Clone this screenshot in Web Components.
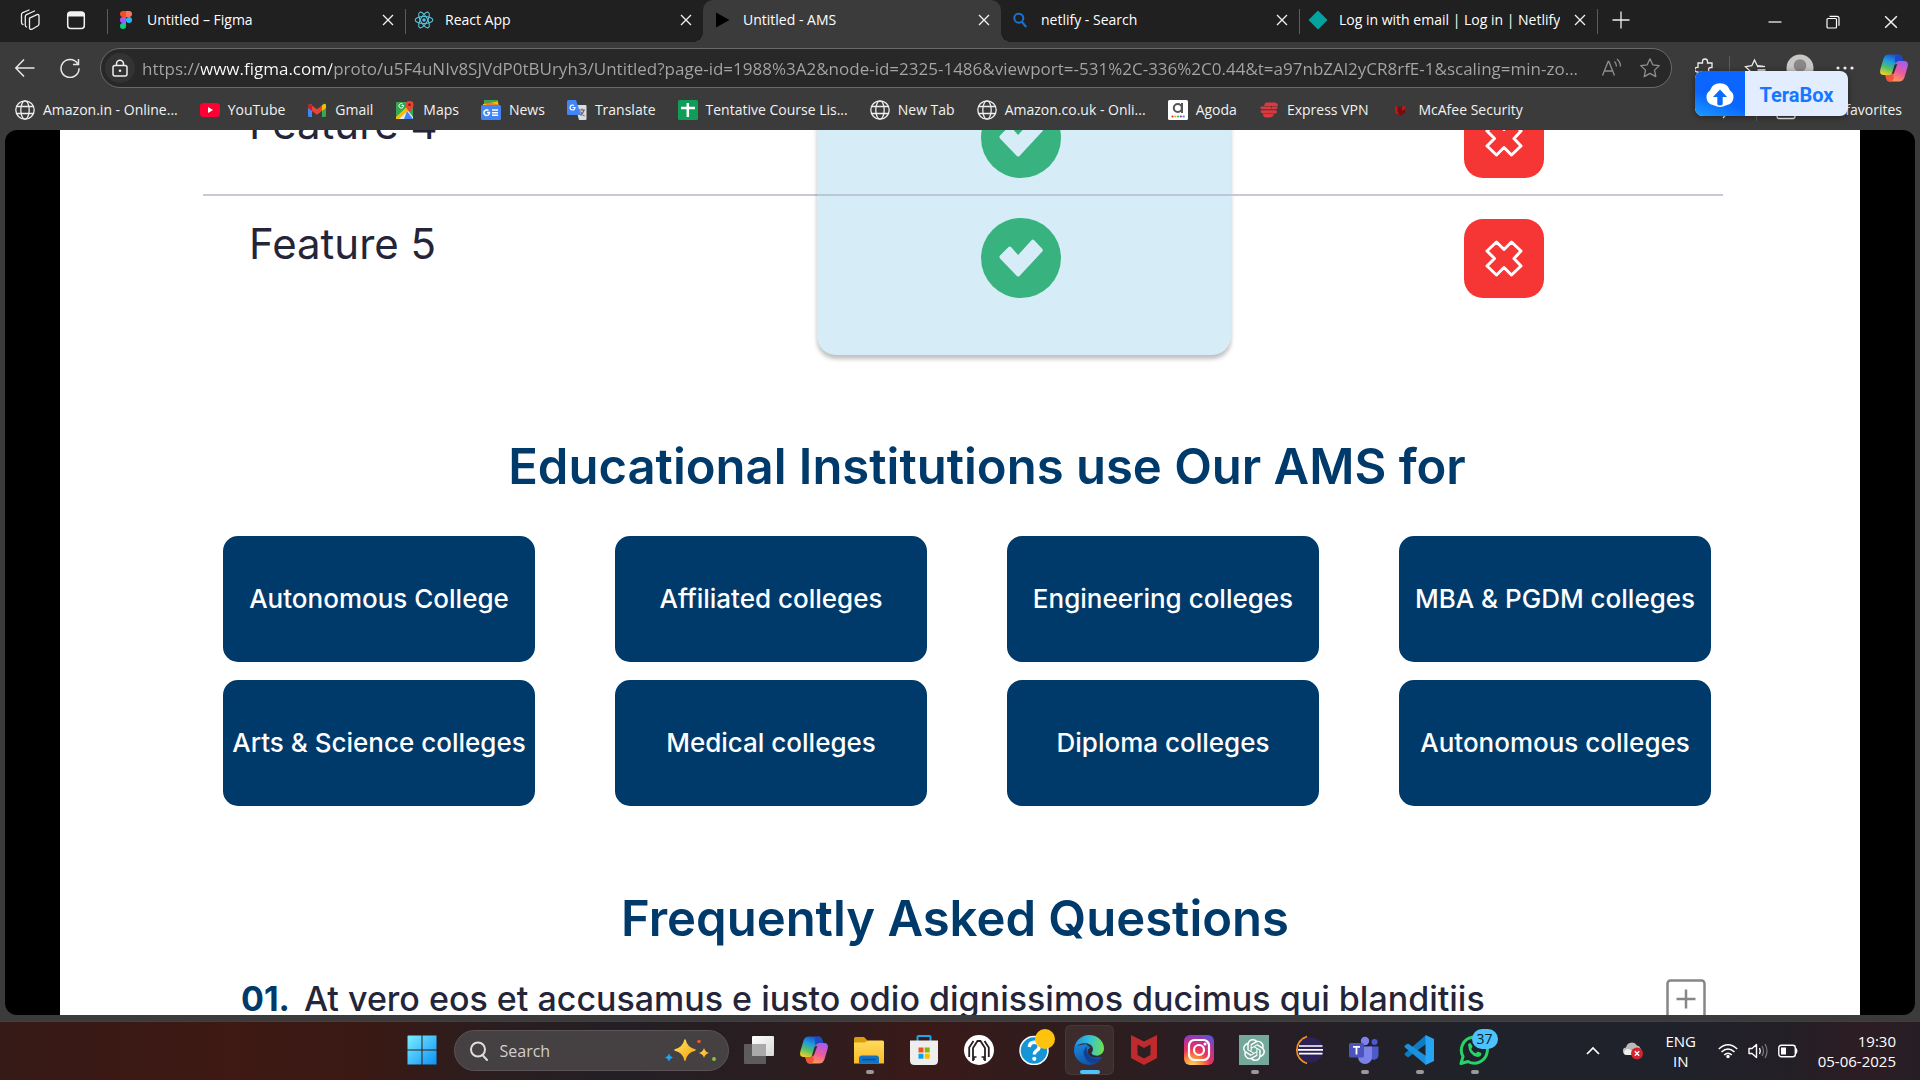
<!DOCTYPE html>
<html lang="en">
<head>
<meta charset="utf-8">
<title>Untitled - AMS</title>
<style>
  html, body { margin: 0; height: 100%; }
  body { font-family: "Open Sans", "Noto Sans", sans-serif; font-size: 14px; color: #fff; background: #3b3b3b; overflow: hidden; }
</style>
</head>
<body>
<desktop-screen></desktop-screen>

<script>
const ICONS = {
  workspaces: ['0 0 22 22', '<g fill="none" stroke="#eee" stroke-width="1.3" stroke-linejoin="round" stroke-linecap="round"><path d="M9.5 9.2 17 5.6q1.6-.6 2 1v8.2q0 1.3-1 2L12 20.200q-2 .8-2.500-1z"/><path d="M6.500 18q-1.200-.4-1.200-2V7.600q0-1.400 1.200-2l8-3.600"/><path d="M3 15.500q-1.500-.4-1.500-2V5.600q0-1.400 1.200-2L9 1"/></g>'],
  tabpane: ['0 0 20 20', '<rect x="1.700" y="2" width="16.600" height="16.500" rx="3" fill="none" stroke="#f2f2f2" stroke-width="1.500"/><path d="M1.700 6.500V5a3 3 0 0 1 3-3h10.600a3 3 0 0 1 3 3v1.500z" fill="#f2f2f2"/>'],
  figma: ['0 0 12 18', '<path d="M3 0h3v6H3a3 3 0 0 1 0-6z" fill="#f24e1e"/><path d="M6 0h3a3 3 0 0 1 0 6H6z" fill="#ff7262"/><path d="M3 6h3v6H3a3 3 0 0 1 0-6z" fill="#a259ff"/><circle cx="9" cy="9" r="3" fill="#1abcfe"/><path d="M3 12h3v3a3 3 0 1 1-3-3z" fill="#0acf83"/>'],
  react: ['0 0 20 20', '<g fill="none" stroke="#58c4dc" stroke-width="1.100"><ellipse cx="10" cy="10" rx="8.800" ry="3.500"/><ellipse cx="10" cy="10" rx="8.800" ry="3.500" transform="rotate(60 10 10)"/><ellipse cx="10" cy="10" rx="8.800" ry="3.500" transform="rotate(120 10 10)"/></g><circle cx="10" cy="10" r="1.700" fill="#58c4dc"/>'],
  play: ['0 0 20 20', '<path d="M4 2.500v15L17.500 10z" fill="#000"/>'],
  lens: ['0 0 20 20', '<g fill="none" stroke="#1a73d0" stroke-width="2" stroke-linecap="round"><circle cx="8.800" cy="8.200" r="4.500"/><path d="m12 12 3.800 4.500"/></g>'],
  diamond: ['0 0 20 20', '<path d="M10 .5 19.500 10 10 19.500.5 10z" fill="#05a3a0"/>'],
  close: ['0 0 12 12', '<path d="m1 1 10 10M11 1 1 11" stroke="#f2f2f2" stroke-width="1.300" fill="none"/>'],
  plus: ['0 0 18 18', '<path d="M9 .5v17M.5 9h17" stroke="#eee" stroke-width="1.300"/>'],
  minimize: ['0 0 14 14', '<path d="M.5 7h13" stroke="#fff" stroke-width="1.200"/>'],
  restore: ['0 0 14 14', '<g fill="none" stroke="#fff" stroke-width="1.200"><rect x="1" y="3.500" width="9.500" height="9.500" rx="1"/><path d="M3.500 1.300H11a2 2 0 0 1 2 2v7.500"/></g>'],
  back: ['0 0 20 20', '<path d="M19.500 10H1M9 1.500.8 10 9 18.500" fill="none" stroke="#e8e8e8" stroke-width="1.500"/>'],
  reload: ['0 0 20 20', '<path d="M17.500 5.500A9 9 0 1 0 19 10.200M18.500 1v5.500H13" fill="none" stroke="#e8e8e8" stroke-width="1.500"/>'],
  lock: ['0 0 18 18', '<g fill="none" stroke="#eee" stroke-width="1.500"><rect x="2" y="6.500" width="14" height="10.500" rx="2"/><path d="M5.500 6.500V4.800a3.500 3.500 0 0 1 7 0v1.700"/></g><circle cx="9" cy="11.700" r="1.300" fill="#eee"/>'],
  aloud: ['0 0 22 20', '<path d="M1.500 17.500 7.200 3.500h.6l5.700 14M3.500 13h8M13.500 3.500q2 2 2 5M16 1q3.500 3 3.500 7.500" fill="none" stroke="#8f8f8f" stroke-width="1.300"/>'],
  star: ['0 0 22 22', '<path d="m11 1.800 2.800 6 6.500.8-4.800 4.500 1.300 6.500L11 16.400l-5.800 3.200 1.300-6.500L1.700 8.600l6.500-.8z" fill="none" stroke="#8f8f8f" stroke-width="1.300" stroke-linejoin="round"/>'],
  puzzle: ['0 0 20 20', '<path d="M3 5h4.500V3.500a2.500 2.500 0 0 1 5 0V5H17v4.500h-1.200a2.300 2.300 0 0 0 0 4.600H17V19H3v-5H2a2.300 2.300 0 0 1 0-4.600h1z" fill="none" stroke="#eee" stroke-width="1.300"/>'],
  favs: ['0 0 22 22', '<path d="M10 19 5 21l1-7-4.500-4.300 6.300-1L10.500 3l2.800 5.700 5.700.8M13.500 13h8M14.500 17h7" fill="none" stroke="#eee" stroke-width="1.300"/><path d="M13 9.500h8" stroke="#eee" stroke-width="1.300"/>'],
  avatar: ['0 0 28 28', '<circle cx="14" cy="14" r="13.500" fill="#c9c7c5"/><circle cx="14" cy="11.500" r="6.300" fill="#8a8886"/><path d="M4 22q10-8 20 0a13 13 0 0 1-20 0z" fill="#e1dfdd"/>'],
  dots: ['0 0 18 6', '<g fill="#eee"><circle cx="2" cy="3" r="1.600"/><circle cx="9" cy="3" r="1.600"/><circle cx="16" cy="3" r="1.600"/></g>'],
  copilot: ['0 0 30 30', '<defs><linearGradient id="a" x1=".6" y1="0" x2=".2" y2="1"><stop offset="0" stop-color="#1b4fd0"/><stop offset=".35" stop-color="#1f9ae0"/><stop offset=".65" stop-color="#4fc06a"/><stop offset="1" stop-color="#f5d028"/></linearGradient><linearGradient id="b" x1=".7" y1="0" x2=".3" y2="1"><stop offset="0" stop-color="#a45cf2"/><stop offset=".5" stop-color="#ee5a9a"/><stop offset="1" stop-color="#ffa04d"/></linearGradient></defs><path d="M20 1.500q2.400.3 3.200 3l1 3.500h-4q-2.500 0-3.400 3L14.500 19q-.9 3-3.500 3H5q-5 0-3.700-5.500L4.500 5.700Q5.800 1.500 10 1.500z" fill="url(#a)"/><path d="M20 1.500q2.400.3 3.200 3l1 3.500h-4.600q-2 0-3.200 2.500l-.6-5Q16 1.500 20 1.500z" fill="#2148c4"/><path d="M10.500 28.500q-2.500-.3-3.300-3L6.300 22H11q2.600 0 3.500-3l2.300-8q.9-3 3.400-3H25q5 0 3.700 5.500l-3.200 10.800q-1.300 4.200-5.500 4.200z" fill="url(#b)"/><path d="M10.500 28.500q-2.500-.3-3.300-3L6.300 22H11q2 0 3-2l.8 4.500q-.2 4-4.300 4z" fill="#f0563c"/><path d="m15.600 11.500 2.800-.5-3.600 9.500-2 .5z" fill="#3a2a33"/>'],
  globe: ['0 0 20 20', '<g fill="none" stroke="#eee" stroke-width="1.300"><circle cx="10" cy="10" r="9.200"/><ellipse cx="10" cy="10" rx="4.200" ry="9.200"/><path d="M1.800 6.500h16.400M1.800 13.500h16.400"/></g>'],
  youtube: ['0 0 20 20', '<rect y="3" width="20" height="14" rx="3.500" fill="#f03"/><path d="M8 7v6l5-3z" fill="#fff"/>'],
  gmail: ['0 0 20 20', '<path d="M1 4.500h4V17H2.500Q1 17 1 15.500z" fill="#4285f4"/><path d="M15 4.500h4v11q0 1.500-1.500 1.500H15z" fill="#34a853"/><path d="M15 5.500 17 4q2-.6 2 1.500V8l-4 3z" fill="#fbbc04"/><path d="M5 5.500 3 4Q1 3.400 1 5.500V8l4 3z" fill="#c5221f"/><path d="m5 5.500 5 3.800 5-3.800V11l-5 3.800L5 11z" fill="#ea4335"/>'],
  maps: ['0 0 20 20', '<rect x="1" y="2" width="17" height="17" rx="1" fill="#34a853"/><path d="M1 19 12 9l6 8v2z" fill="#e8eaed"/><path d="m1 17 16-15h1v4L4 19H1z" fill="#fbbc04"/><path d="m9 19 3-8 6 8z" fill="#4285f4"/><path d="M14.500 12Q10.500 7.500 10.500 5a4 4 0 0 1 8 0q0 2.500-4 7z" fill="#ea4335"/><circle cx="14.500" cy="4.800" r="1.300" fill="#811b13"/><path d="M6.500 5.500h2A2.300 2.300 0 1 1 7.600 4" fill="none" stroke="#fff"/>'],
  news: ['0 0 20 20', '<path d="M3 0h14v8H3z" fill="#34a853"/><path d="m2 4 15-2.500L18 8H2z" fill="#fbbc04"/><path d="M5 1.500 19 5v4H5z" fill="#ea4335" opacity=".5"/><rect y="5" width="20" height="15" rx="1.500" fill="#4285f4"/><path d="M6 12.500h2.500a2.800 2.800 0 1 1-1-2M11 10h6M11 12.700h6M11 15.300h6" fill="none" stroke="#fff" stroke-width="1.500"/>'],
  translate: ['0 0 20 20', '<path d="M8 5h10.500q1 0 1 1v13q0 1-1 1H12z" fill="#dadce0"/><path d="M1.500 0H9l5 15H1.500Q0 15 0 13.500v-12Q0 0 1.500 0z" fill="#4285f4"/><path d="M5.500 7.500H8A2.500 2.500 0 1 1 7 5.500" fill="none" stroke="#fff" stroke-width="1.200"/><path d="M12 10h6M15 8.500V10M17 10q-1 4-3.500 5.500M13.500 11.500q1.500 3 4 4.500" fill="none" stroke="#5f6368" stroke-width="1.100"/>'],
  sheet: ['0 0 20 20', '<rect width="20" height="20" rx="1.500" fill="#0f9d58"/><path d="M9.800 3v14M3 8h14" stroke="#fff" stroke-width="2.500"/>'],
  agoda: ['0 0 20 20', '<rect width="20" height="20" rx="1.500" fill="#fff"/><circle cx="9.800" cy="8" r="4" fill="none" stroke="#555" stroke-width="2"/><path d="M14 3v10" stroke="#555" stroke-width="2"/><circle cx="4.500" cy="16.500" r="1.100" fill="#e12d2d"/><circle cx="7.300" cy="16.500" r="1.100" fill="#f5a623"/><circle cx="10.100" cy="16.500" r="1.100" fill="#3db54a"/><circle cx="12.900" cy="16.500" r="1.100" fill="#a033b5"/><circle cx="15.700" cy="16.500" r="1.100" fill="#2a8fe0"/>'],
  express: ['0 0 20 20', '<path d="M7 2.500h8q4 0 4 3.400H5q.4-2.400 2-3.400zM2 6.400h10v2.900H4Q0 9.300 2 6.400zM13 6.400h5.500q0 2-1 2.900H12zM2 10.300h15q2 1.300 0 3.200H4Q1 13.500 2 10.300zM4 14h11q-1 3.500-5 3.500H7Q4 17.500 4 14z" fill="#da3940"/>'],
  mcafeeSmall: ['0 0 20 20', '<path d="m5 5 5 2.500L15 5v8l-5 3-5-3z" fill="#6d1015"/><path d="M5 5v8l4.500 2.500-2-4V7zM15 5v4l-3 2V7z" fill="#c01818"/>'],
  chevron: ['0 0 12 20', '<path d="m3 4 6 7-6 7" fill="none" stroke="#eee" stroke-width="1.300"/>'],
  folderLine: ['0 0 20 20', '<path d="M1 16V4q0-2 2-2h4l2.500 2.500H17q2 0 2 2V16q0 2.500-2 2.500H3q-2 0-2-2.500z" fill="none" stroke="#eee" stroke-width="1.300"/>'],
  terabox: ['0 0 32 32', '<path d="M9 27a8 8 0 0 1-3-14.500 10.500 10.500 0 0 1 20 0A8 8 0 0 1 23 27q-4.500 2-7 2t-7-2z" fill="#fff"/><path d="M16 11.500 23 19h-4.300v7.500q-2.700 2-5.400 0V19H9z" fill="#0a6cff"/>'],
  check: ['0 0 80 80', '<circle cx="40" cy="40" r="40" fill="#38b27f"/><path d="m19 37.500 8.500-8.500q1.300-1.200 2.600 0l7 8L50.500 22.300q1.300-1.400 2.700 0l8 8.500q1.400 1.400 0 2.800L38.500 58q-1.300 1.200-2.600 0L19 40.500q-1.200-1.500 0-3z" fill="#d6ecf7"/>'],
  cross: ['0 0 80 80', '<rect y="1" width="80" height="79" rx="19" fill="#f63535"/><path d="M32.500 24 40 31.500 47.500 24 57 33l-7 7.500 7 7.500-9.500 9-7.500-7.500-7.500 7.500-9.500-9 7.500-7.500-7.500-7.500z" fill="none" stroke="#fff" stroke-width="3" stroke-linejoin="round"/>'],
  expand: ['0 0 40 40', '<rect x="1.500" y="1.500" width="37" height="37" rx="3" fill="none" stroke="#868686" stroke-width="2.500"/><path d="M20 10.500v19M10.500 20h19" stroke="#868686" stroke-width="2.500"/>'],
  start: ['0 0 30 30', '<defs><linearGradient id="a" x1="0" y1="0" x2="30" y2="30" gradientUnits="userSpaceOnUse"><stop offset="0" stop-color="#7df0ff"/><stop offset="1" stop-color="#0a90f5"/></linearGradient></defs><path d="M1 .5h13.500v14H.5V1zM15.500.5H29.500v14h-14zM.5 15.500h14v14H.5zM15.500 15.500h14v14h-14z" fill="url(#a)"/>'],
  search: ['0 0 20 20', '<g fill="none" stroke="#ddd" stroke-width="2" stroke-linecap="round"><circle cx="9" cy="8.500" r="7"/><path d="m13.500 14 4.500 5"/></g>'],
  sparkle: ['0 0 52 26', '<defs><linearGradient id="a" x1="0" y1="0" x2="1" y2="1"><stop offset="0" stop-color="#ffe45a"/><stop offset="1" stop-color="#f9a012"/></linearGradient></defs><path d="M20 2q1.500 8 10 10-8.500 2-10 10-1.500-8-10-10 8.500-2 10-10z" fill="url(#a)" stroke="url(#a)" stroke-width="1.500" stroke-linejoin="round"/><path d="M39 10q1 4 5 5-4 1-5 5-1-4-5-5 4-1 5-5z" fill="url(#a)"/><path d="M4 15.500q.8 3.200 4 4-3.200.8-4 4-.8-3.200-4-4 3.200-.8 4-4z" fill="#1ca4f0"/><circle cx="34" cy="3.500" r="1.800" fill="#f0592b"/><circle cx="49" cy="21" r="1.900" fill="#8bc83f"/>'],
  taskview: ['0 0 30 30', '<defs><linearGradient id="a" x1="0" y1="0" x2="1" y2="1"><stop offset="0" stop-color="#fff"/><stop offset="1" stop-color="#d8d8d8"/></linearGradient></defs><rect x="8" y="1" width="22" height="20" rx="1" fill="url(#a)"/><rect x="0" y="9" width="22" height="20" rx="1" fill="#666" opacity=".85"/><path d="M8 9h14v12H8z" fill="#aaa"/>'],
  explorer: ['0 0 30 30', '<defs><linearGradient id="a" x1="0" y1="0" x2="0" y2="1"><stop offset="0" stop-color="#ffdb5a"/><stop offset="1" stop-color="#fbb92a"/></linearGradient></defs><path d="M0 8V3.500Q0 2 1.500 2H10l4 4-4 4z" fill="#d99a0b"/><path d="M0 7.500h10.500L14 5.500h14.500q1.500 0 1.500 1.500v21.500H0z" fill="url(#a)"/><path d="M5 28.500v-5Q5 20.500 8 20.500h14q3 0 3 3v5z" fill="#1272c4"/><path d="M9 24.500h12" stroke="#0a4f94" stroke-width="1.500" stroke-linecap="round"/>'],
  store: ['0 0 30 30', '<path d="M8.500 6V2Q8.500 1 9.500 1h11q1 0 1 1v4" fill="none" stroke="#1aa7ec" stroke-width="2"/><path d="M1 5.500h28v20q0 4.500-4.500 4.500h-19Q1 30 1 25.500z" fill="#eee"/><path d="M9.500 12.500h5v5h-5z" fill="#f25022"/><path d="M15.700 12.500h5v5h-5z" fill="#7fba00"/><path d="M9.500 18.700h5v5h-5z" fill="#00a4ef"/><path d="M15.700 18.700h5v5h-5z" fill="#ffb900"/>'],
  arch: ['0 0 30 30', '<circle cx="15" cy="15" r="15" fill="#fff"/><path d="M9 26V13l4.500-7h3L21 13v13M5.200 22v-9.500L9.500 6M24.800 22v-9.500L20.500 6" fill="none" stroke="#2a1e20" stroke-width="1.800"/><path d="M10 25v-3h2.500M20 25v-3h-2.500" fill="none" stroke="#2a1e20" stroke-width="1.500"/>'],
  help: ['0 0 30 30', '<circle cx="15" cy="15.500" r="14" fill="#1496d6" stroke="#fff" stroke-width="1.500"/><path d="M10.300 12q.4-4.800 5-4.800t4.900 4.200q0 2.500-2.600 4.300-2.200 1.500-2.200 3.800" fill="none" stroke="#fff" stroke-width="3.400"/><circle cx="15.300" cy="23.800" r="2.100" fill="#fff"/>'],
  edge: ['0 0 30 30', '<defs><linearGradient id="a" x1="0" y1=".4" x2="1" y2=".5"><stop offset="0" stop-color="#1f8fe0"/><stop offset=".5" stop-color="#35c1d8"/><stop offset="1" stop-color="#6ee04f"/></linearGradient><linearGradient id="b" x1="0" y1="0" x2=".6" y2="1"><stop offset="0" stop-color="#1a8ade"/><stop offset="1" stop-color="#0c50a8"/></linearGradient></defs><path d="M0 15a15 15 0 0 0 15 15q8.500 0 13-7L12 9 1 11z" fill="url(#b)"/><path d="M.3 13C1.500 5.500 7.500 0 15 0c8.500 0 15 6.200 15 13.200 0 4.800-3.800 7.300-7.500 7.300-3 0-4.800-1-4.800-2.200 0-1 1.300-1.600 1.300-4 0-3.500-3.500-6-7.500-6C6.500 8.300 2 10 .3 13z" fill="url(#a)"/><path d="M13 11.500q-6 5-1.500 12 4.500 6 10.500 4.600 4-2 6.300-5.600-7 3-12-.5-4.800-4-3.300-10.500z" fill="#123f8f"/><path d="M17.500 12.500q-4.500 1-3.800 5 1.500 5.500 9 5 3.500 0 5.800-2-4.500 1.500-8.500 0-4.500-1.800-1.500-4.500.8-2-1-3.500z" fill="#33262b"/>'],
  mcafee: ['0 0 30 30', '<path d="m2 0 13 6.500L28 0v23l-13 7-13-7z" fill="#c12a2c"/><path d="m8.500 9.500 6.500 3.500 6.500-3.500V20L15 23.500 8.500 20z" fill="#2b1f22"/>'],
  instagram: ['0 0 30 30', '<defs><radialGradient id="a" cx=".28" cy="1.050" r="1.150"><stop offset="0" stop-color="#ffdc6b"/><stop offset=".28" stop-color="#fb8a3c"/><stop offset=".52" stop-color="#e8325c"/><stop offset=".78" stop-color="#b5329c"/><stop offset="1" stop-color="#5b51d8"/></radialGradient></defs><rect width="30" height="30" rx="6" fill="url(#a)"/><g fill="none" stroke="#fff" stroke-width="2.200"><rect x="5" y="5" width="20" height="20" rx="5.500"/><circle cx="15" cy="15" r="5"/></g><circle cx="21" cy="9" r="1.500" fill="#fff"/>'],
  chatgpt: ['0 0 30 30', '<rect width="30" height="30" fill="#74a89b"/><path transform="translate(4 4) scale(.917)" fill="#fff" d="M22.2819 9.8211a5.9847 5.9847 0 0 0-.5157-4.9108 6.0462 6.0462 0 0 0-6.5098-2.9A6.0651 6.0651 0 0 0 4.9807 4.1818a5.9847 5.9847 0 0 0-3.9977 2.9 6.0462 6.0462 0 0 0 .7427 7.0966 5.98 5.98 0 0 0 .511 4.9107 6.051 6.051 0 0 0 6.5146 2.9001A5.9847 5.9847 0 0 0 13.2599 24a6.0557 6.0557 0 0 0 5.7718-4.2058 5.9894 5.9894 0 0 0 3.9977-2.9001 6.0557 6.0557 0 0 0-.7475-7.0729zm-9.022 12.6081a4.4755 4.4755 0 0 1-2.8764-1.0408l.1419-.0804 4.7783-2.7582a.7948.7948 0 0 0 .3927-.6813v-6.7369l2.02 1.1686a.071.071 0 0 1 .038.052v5.5826a4.504 4.504 0 0 1-4.4945 4.4944zm-9.6607-4.1254a4.4708 4.4708 0 0 1-.5346-3.0137l.142.0852 4.783 2.7582a.7712.7712 0 0 0 .7806 0l5.8428-3.3685v2.3324a.0804.0804 0 0 1-.0332.0615L9.74 19.9502a4.4992 4.4992 0 0 1-6.1408-1.6464zM2.3408 7.8956a4.485 4.485 0 0 1 2.3655-1.9728V11.6a.7664.7664 0 0 0 .3879.6765l5.8144 3.3543-2.0201 1.1685a.0757.0757 0 0 1-.071 0l-4.8303-2.7865A4.504 4.504 0 0 1 2.3408 7.872zm16.5963 3.8558L13.1038 8.364 15.1192 7.2a.0757.0757 0 0 1 .071 0l4.8303 2.7913a4.4944 4.4944 0 0 1-.6765 8.1042v-5.6772a.79.79 0 0 0-.407-.667zm2.0107-3.0231l-.142-.0852-4.7735-2.7818a.7759.7759 0 0 0-.7854 0L9.409 9.2297V6.8974a.0662.0662 0 0 1 .0284-.0615l4.8303-2.7866a4.4992 4.4992 0 0 1 6.6802 4.66zM8.3065 12.863l-2.02-1.1638a.0804.0804 0 0 1-.038-.0567V6.0742a4.4992 4.4992 0 0 1 7.3757-3.4537l-.142.0805L8.704 5.459a.7948.7948 0 0 0-.3927.6813zm1.0976-2.3654l2.602-1.4998 2.6069 1.4998v2.9994l-2.5974 1.4997-2.6067-1.4997Z"/>'],
  eclipse: ['0 0 30 30', '<path d="M13 1.500a14 14 0 0 0 0 27A15 15 0 0 1 13 1.500z" fill="#f7941e" stroke="#f7941e" stroke-width="1.500"/><circle cx="16.500" cy="15" r="12.800" fill="#2c2255"/><path d="M5 11h23.500M4 14.800h25M5 18.600h23.500" stroke="#fff" stroke-width="1.700"/>'],
  teams: ['0 0 30 30', '<circle cx="16" cy="6" r="4.200" fill="#7b83eb"/><circle cx="25.500" cy="7" r="3" fill="#5059c9"/><path d="M20 11.500h9.500V20a5 5 0 0 1-9.500 2z" fill="#5059c9"/><path d="M9 11.500h14V22a7 7 0 0 1-14 0z" fill="#7b83eb"/><rect x="0" y="8" width="15" height="14.500" rx="1.500" fill="#4b53bc"/><path d="M4 11.800h7M7.500 11.800V19.500" stroke="#fff" stroke-width="1.800"/>'],
  vscode: ['0 0 30 30', '<path d="M22 0v9L4 22.500 1 20q-1-.8 0-1.800z" fill="#0f7bc4"/><path d="M22 30v-9L4 8.500 1 10.500q-1 1 0 2z" fill="#1b90dd"/><path d="m21.500 0 8.500 4v22l-8.500 4z" fill="#26a5f5"/>'],
  whatsapp: ['0 0 30 30', '<path d="M2 28.500 4 21.500A13 13 0 1 1 9 26.500z" fill="none" stroke="#25d366" stroke-width="3" stroke-linejoin="round"/><path d="M9 9.500q2-3 3.500 0l1 2.500-1.300 2q1.500 3 4.600 4.300l2-1.800 3.500 1.500q.5 3.500-3.500 4Q10 21 9 9.500z" fill="#25d366"/>'],
  up: ['0 0 14 10', '<path d="m1 8 6-6 6 6" fill="none" stroke="#fff" stroke-width="1.700"/>'],
  cloud: ['0 0 20 18', '<path d="M3.500 12.500a3.500 3.500 0 0 1-.5-7A6 6 0 0 1 14 3.500a4.500 4.500 0 0 1 3 7l-2 2z" fill="#b9b9b9"/><path d="M1 11q0-4 4.500-4 6 2 7 6H4Q1 13 1 11z" fill="#eee"/><circle cx="14" cy="11.500" r="6" fill="#d8232e"/><path d="m11.800 9.300 4.400 4.400M16.200 9.300l-4.400 4.400" stroke="#fff" stroke-width="1.400"/>'],
  wifi: ['0 0 20 16', '<g fill="none" stroke="#fff" stroke-width="1.500"><path d="M.8 6q9.200-8.500 18.400 0M3.500 9Q10 3 16.500 9M6.200 12q3.800-3.500 7.600 0"/></g><circle cx="10" cy="13.500" r="1.700" fill="#fff"/>'],
  sound: ['0 0 20 18', '<path d="M1 6.500h3L8.500 2.500v13L4 11.500H1zM11.500 6q1.500 3 0 6" fill="none" stroke="#fff" stroke-width="1.400" stroke-linejoin="round"/><path d="M14 4q3 5 0 10M17 2q4 7 0 14" fill="none" stroke="#777" stroke-width="1.300"/>'],
  battery: ['0 0 20 14', '<rect x=".8" y="1.200" width="16.500" height="11.600" rx="2.500" fill="none" stroke="#fff" stroke-width="1.400"/><rect x="3" y="3.500" width="5" height="7" fill="#fff"/><path d="M18.300 4.500q1.500 2.500 0 5z" fill="#fff" stroke="#fff"/>']
};

function define(name, html, setup) {
  const template = document.createElement('template');
  template.innerHTML = html;
  customElements.define(name, class extends HTMLElement {
    constructor() {
      super();
      this.attachShadow({ mode: 'open' }).append(template.content.cloneNode(true));
    }
    connectedCallback() { if (setup) setup(this, this.shadowRoot); }
  });
}

/* Shared reset for icon-only buttons. */
const BTN = 'button{display:flex;align-items:center;justify-content:center;border:0;padding:0;margin:0;background:none;color:inherit;font:inherit;}';

/* Fills the .icon holder of a root with the named icon. */
function putIcon(root, name, size) {
  const icon = document.createElement('x-icon');
  icon.setAttribute('name', name);
  icon.setAttribute('w', size);
  root.querySelector('.icon').replaceChildren(icon);
}

define('x-icon', `<style>:host{display:inline-flex;flex:none}svg{display:block}</style>`, (el, root) => {
  const [box, body] = ICONS[el.getAttribute('name')];
  const w = el.getAttribute('w') || 20, h = el.getAttribute('h') || w;
  root.querySelector('svg')?.remove();
  root.append(document.createRange().createContextualFragment(`<svg xmlns="http://www.w3.org/2000/svg" width="${w}" height="${h}" viewBox="${box}" aria-hidden="true">${body}</svg>`));
});

define('icon-button', `<style>:host{display:block;flex:none}${BTN}button{width:var(--w,40px);height:var(--h,40px)}</style><button type="button"><slot></slot></button>`,
  (el, root) => root.querySelector('button').setAttribute('aria-label', el.getAttribute('label')));

define('browser-tab', `<style>
  :host{display:flex;align-items:center;position:relative;flex:0 1 298px;min-width:0;height:42px;box-sizing:border-box;padding:0 11px 8px 9px}
  :host([line])::after{content:"";position:absolute;left:0;top:9px;width:1px;height:25px;background:#5c5c5c}
  :host([active]){background:#3b3b3b;border-radius:10px 10px 0 0}
  :host([active])::before,:host([active])::after{content:"";position:absolute;bottom:0;width:10px;height:10px}
  :host([active])::before{left:-10px;background:radial-gradient(circle at 0 0,transparent 10px,#3b3b3b 10px)}
  :host([active])::after{right:-10px;background:radial-gradient(circle at 100% 0,transparent 10px,#3b3b3b 10px)}
  ${BTN}
  .title{flex:1;min-width:0;gap:11px;justify-content:flex-start;height:34px;padding-top:6px}
  .title span{white-space:nowrap;overflow:hidden;line-height:20px}
  .x{width:24px;height:24px;margin:6px -6px 0 0}
  </style><button class="title" type="button"><slot name="icon"></slot><span><slot></slot></span></button><button class="x" type="button" aria-label="Close tab"><x-icon name="close" w="12"></x-icon></button>`);

define('tab-strip', `<style>
  :host{display:flex;height:42px;background:#202020}
  .lead{display:flex;padding-left:8px;width:99px}
  .fav{display:flex;width:20px;justify-content:center}
  .win{display:flex;margin-left:auto}
  icon-button{--h:40px}
  .lead icon-button{--w:45px}
  .end{width:1px;height:25px;margin-top:9px;background:#5c5c5c}
  .new{--w:46px}
  .win icon-button{--w:58px;--h:44px}
  </style>
  <div class="lead"><icon-button label="Workspaces"><x-icon name="workspaces" w="22"></x-icon></icon-button><icon-button label="Tab actions"><x-icon name="tabpane" w="20"></x-icon></icon-button></div>
  <browser-tab line><div class="fav" slot="icon"><x-icon name="figma" w="12" h="18"></x-icon></div>Untitled – Figma</browser-tab>
  <browser-tab line><div class="fav" slot="icon"><x-icon name="react"></x-icon></div>React App</browser-tab>
  <browser-tab active><div class="fav" slot="icon"><x-icon name="play"></x-icon></div>Untitled - AMS</browser-tab>
  <browser-tab><div class="fav" slot="icon"><x-icon name="lens"></x-icon></div>netlify - Search</browser-tab>
  <browser-tab line><div class="fav" slot="icon"><x-icon name="diamond"></x-icon></div>Log in with email | Log in | Netlify</browser-tab>
  <div class="end"></div>
  <icon-button class="new" label="New tab"><x-icon name="plus" w="18"></x-icon></icon-button>
  <div class="win"><icon-button label="Minimize"><x-icon name="minimize" w="14"></x-icon></icon-button><icon-button label="Restore"><x-icon name="restore" w="14"></x-icon></icon-button><icon-button label="Close"><x-icon name="close" w="14"></x-icon></icon-button></div>`);

define('address-bar', `<style>
  :host{display:flex;align-items:center;height:52px;padding-left:5px;box-sizing:border-box}
  .reload{margin:0 10px 0 5px}
  form{flex:1;display:flex;align-items:center;min-width:0;height:40px;box-sizing:border-box;margin-right:10px;border:1px solid #6a6a6a;border-radius:20px;background:#282828;padding:0 4px}
  .lock{--w:30px;--h:30px;border-radius:15px;background:#333}
  input{flex:1;min-width:0;height:36px;border:0;outline:0;padding:0;margin-left:7px;font:17px/24px "Open Sans","Noto Sans",sans-serif;color:#a6a6a6;
    background:linear-gradient(90deg,#a6a6a6 59px,#fff 59px 190px,#a6a6a6 190px);-webkit-background-clip:text;background-clip:text;-webkit-text-fill-color:transparent}
  .tool{--w:45px}
  .aloud{--w:40px}
  .fav{--w:35px}
  i{width:1px;height:24px;background:#5c5c5c;margin:0 2px}
  .co{--w:53px}
  </style>
  <icon-button label="Back"><x-icon name="back"></x-icon></icon-button>
  <icon-button class="reload" label="Refresh"><x-icon name="reload"></x-icon></icon-button>
  <form><icon-button class="lock" label="Site information"><x-icon name="lock" w="18"></x-icon></icon-button>
  <input type="text" aria-label="Address" value="https://www.figma.com/proto/u5F4uNIv8SJVdP0tBUryh3/Untitled?page-id=1988%3A2&amp;node-id=2325-1486&amp;viewport=-531%2C-336%2C0.44&amp;t=a97nbZAl2yCR8rfE-1&amp;scaling=min-zo...">
  <icon-button class="aloud" label="Read aloud"><x-icon name="aloud" w="22" h="20"></x-icon></icon-button><icon-button class="fav" label="Add to favorites"><x-icon name="star" w="22"></x-icon></icon-button></form>
  <icon-button class="tool" label="Extensions"><x-icon name="puzzle"></x-icon></icon-button><i></i>
  <icon-button class="tool" label="Favorites"><x-icon name="favs" w="22"></x-icon></icon-button>
  <icon-button class="tool" label="Profile"><x-icon name="avatar" w="28"></x-icon></icon-button>
  <icon-button class="tool" label="Settings and more"><x-icon name="dots" w="18" h="6"></x-icon></icon-button>
  <icon-button class="co" label="Copilot"><x-icon name="copilot" w="30"></x-icon></icon-button>`);

define('bookmark-link', `<style>:host{display:block;flex:none}a{display:flex;align-items:center;gap:8px;color:#f2f2f2;text-decoration:none;line-height:20px;white-space:nowrap}.icon{display:flex}</style><a href="#"><span class="icon"></span><slot></slot></a>`,
  (el, root) => putIcon(root, el.getAttribute('icon'), 20));

define('bookmarks-bar', `<style>
  :host{display:flex;align-items:center;height:36px;box-sizing:border-box;padding:0 18px 4px 15px;gap:22px}
  .more{display:flex;align-items:center;margin-left:auto}
  i{width:1px;height:22px;background:#5c5c5c;margin:0 19px 0 24px}
  a{width:106px;text-align:right;color:#f2f2f2;text-decoration:none;line-height:20px}
  </style>
  <bookmark-link icon="globe">Amazon.in - Online...</bookmark-link><bookmark-link icon="youtube">YouTube</bookmark-link><bookmark-link icon="gmail">Gmail</bookmark-link><bookmark-link icon="maps">Maps</bookmark-link><bookmark-link icon="news">News</bookmark-link><bookmark-link icon="translate">Translate</bookmark-link><bookmark-link icon="sheet">Tentative Course Lis...</bookmark-link><bookmark-link icon="globe">New Tab</bookmark-link><bookmark-link icon="globe">Amazon.co.uk - Onli...</bookmark-link><bookmark-link icon="agoda">Agoda</bookmark-link><bookmark-link icon="express">Express VPN</bookmark-link><bookmark-link icon="mcafeeSmall">McAfee Security</bookmark-link>
  <div class="more"><x-icon name="chevron" w="12" h="20"></x-icon><i></i><x-icon name="folderLine"></x-icon><a href="#">favorites</a></div>`);

define('terabox-badge', `<style>
  :host{position:absolute;right:72px;top:71px;display:block}
  button{display:flex;align-items:stretch;width:153px;height:45px;border:0;padding:0;border-radius:8px;overflow:hidden;background:#e2edff;box-shadow:0 1px 6px rgba(0,0,0,.4);color:#1677ff;font:700 20px/48px Roboto,sans-serif}
  span{display:flex;justify-content:center}
  .logo{width:50px;align-items:center;background:linear-gradient(200deg,#0a66ff 60%,#1a9bff)}
  .name{flex:1}
  </style><button type="button"><span class="logo"><x-icon name="terabox" w="32"></x-icon></span><span class="name"><slot></slot></span></button>`);

define('feature-table', `<style>
  :host{display:block;margin:-54px 137px 0 143px}
  table{width:100%;table-layout:fixed;border-collapse:separate;border-spacing:0;color:#25253a;font:400 42px/51px Inter,"Open Sans",sans-serif}
  th,td{padding:22px 0 16px;text-align:center;vertical-align:top;border-bottom:2px solid #c6cad6;font-weight:400}
  th{width:40.4%;padding-left:46px;text-align:left;box-sizing:border-box}
  .plan{width:27.2%;box-sizing:border-box;padding-right:6px;background:#d6ecf7;box-shadow:0 4px 4px rgba(0,0,0,.25);border-color:#b9c7d8}
  .other{padding-left:55px}
  tr:last-child>*{border-bottom:0;padding-bottom:57px}
  tr:last-child>.plan{border-radius:0 0 19px 19px}
  x-icon{display:flex;justify-content:center}
  </style>
  <table aria-label="Feature comparison"><tbody>
  <tr><th scope="row">Feature 4</th><td class="plan"><x-icon name="check" w="80"></x-icon></td><td class="other"><x-icon name="cross" w="80"></x-icon></td></tr>
  <tr><th scope="row">Feature 5</th><td class="plan"><x-icon name="check" w="80"></x-icon></td><td class="other"><x-icon name="cross" w="80"></x-icon></td></tr>
  </tbody></table>`);

define('section-title', `<style>:host{display:block}h2{margin:0;text-align:center;color:#003a6b;font:600 49px/60px Inter,"Open Sans",sans-serif}</style><h2><slot></slot></h2>`);

define('college-card', `<style>:host{display:block}button{display:block;width:100%;height:126px;border:0;border-radius:15px;padding:0;background:#003a6b;color:#fff;white-space:nowrap;font:500 26px/36px Inter,"Open Sans",sans-serif}</style><button type="button"><slot></slot></button>`);

define('faq-item', `<style>
  :host{display:flex;align-items:flex-start;margin:30px 154px 0 181px;font:500 34px/40px Inter,"Open Sans",sans-serif;color:#25253a;white-space:nowrap}
  b{width:63px;color:#003a6b;font-weight:700}
  .q{flex:1}
  ${BTN}
  </style><b><slot name="number"></slot></b><span class="q"><slot></slot></span><button type="button" aria-label="Expand"><x-icon name="expand" w="40"></x-icon></button>`);

define('ams-page', `<style>
  :host{flex:1;min-width:0;display:block;background:#fff;overflow:hidden}
  .uses{margin-top:82px;padding-left:54px}
  .cards{display:grid;grid-template-columns:repeat(4,1fr);gap:18px 80px;margin:39px 149px 0 163px}
  .faq{margin-top:83px;padding-right:10px}
  </style>
  <feature-table></feature-table>
  <section-title class="uses">Educational Institutions use Our AMS for</section-title>
  <div class="cards"><college-card>Autonomous College</college-card><college-card>Affiliated colleges</college-card><college-card>Engineering colleges</college-card><college-card>MBA &amp; PGDM colleges</college-card><college-card>Arts &amp; Science colleges</college-card><college-card>Medical colleges</college-card><college-card>Diploma colleges</college-card><college-card>Autonomous colleges</college-card></div>
  <section-title class="faq">Frequently Asked Questions</section-title>
  <faq-item><span slot="number">01.</span>At vero eos et accusamus e iusto odio dignissimos ducimus qui blanditiis</faq-item>`);

define('task-app', `<style>
  :host{display:block;position:relative;width:55px;height:59px;flex:none}
  ${BTN}
  button{width:49px;height:50px;margin:3px 3px 0;border-radius:6px;box-sizing:border-box}
  .icon{display:flex}
  :host([active]) button{background:rgba(255,255,255,.07);border:1px solid rgba(255,255,255,.06)}
  :host([open])::after{content:"";position:absolute;left:24px;top:48px;width:8px;height:4px;border-radius:2px;background:#9c9798}
  :host([active])::after{content:"";position:absolute;left:18px;top:48px;width:20px;height:4px;border-radius:2px;background:#4cc2ff}
  </style><button type="button"><span class="icon"></span></button><slot></slot>`,
  (el, root) => {
    putIcon(root, el.getAttribute('icon'), 30);
    root.querySelector('button').setAttribute('aria-label', el.getAttribute('icon'));
  });

define('task-search', `<style>
  :host{display:block;width:275px;margin:8px 3px 0 4px}
  label{display:flex;align-items:center;height:41px;box-sizing:border-box;border:1px solid #5b5356;border-radius:21px;background:#454042;padding:0 11px 0 14px}
  input{flex:1;min-width:0;border:0;outline:0;background:none;padding:0;margin-left:11px;color:#fff;font:16px/24px "Open Sans","Noto Sans",sans-serif}
  input::placeholder{color:#d2cecf;opacity:1}
  </style><label><x-icon name="search"></x-icon><input type="text" placeholder="Search" aria-label="Search"><x-icon name="sparkle" w="52" h="26"></x-icon></label>`);

define('task-bar', `<style>
  :host{display:grid;grid-template-columns:1fr auto 1fr;height:59px;border-top:1px solid #4a3b3a;box-sizing:border-box;
    background:linear-gradient(90deg,#361a17 0,#3f1914 12%,#3a1914 19%,#2c1d1e 25%,#231f25 32%,#2b1d20 41%,#3a1a18 48%,#311c1d 54%,#281e23 64%,#20222a 76%,#1f222b 86%,#231f26 93%,#2d1c23 97%,#261e25)}
  .apps{display:flex;grid-column:2;margin-right:24px}
  .badge{position:absolute;display:block;top:7px;border-radius:10px}
  .dot{left:28px;width:20px;height:20px;background:#ffc20e}
  .count{left:25px;width:26px;height:20px;background:#4cc2ff;color:#10202c;text-align:center;font-size:14px;line-height:20px}
  .tray{display:flex;align-items:center;justify-content:flex-end;padding:0 24px 2px 0;font-size:15px;line-height:20px}
  .lang{width:38px;text-align:center;margin-right:18px}
  .tray x-icon{margin-right:10px}
  .tray .up{margin-right:23px}
  .tray .cloud{margin-right:19px}
  .clock{text-align:right;margin-left:10px}
  </style>
  <div class="apps"><task-app icon="start"></task-app><task-search></task-search><task-app icon="taskview"></task-app><task-app icon="copilot"></task-app><task-app icon="explorer" open></task-app><task-app icon="store"></task-app><task-app icon="arch"></task-app><task-app icon="help"><span class="badge dot"></span></task-app><task-app icon="edge" active></task-app><task-app icon="mcafee"></task-app><task-app icon="instagram"></task-app><task-app icon="chatgpt" open></task-app><task-app icon="eclipse"></task-app><task-app icon="teams" open></task-app><task-app icon="vscode" open></task-app><task-app icon="whatsapp" open><span class="badge count">37</span></task-app></div>
  <div class="tray"><x-icon class="up" name="up" w="14" h="10"></x-icon><x-icon class="cloud" name="cloud" w="20" h="18"></x-icon><div class="lang">ENG<br>IN</div><x-icon name="wifi" w="20" h="16"></x-icon><x-icon name="sound" w="20" h="18"></x-icon><x-icon name="battery" w="20" h="14"></x-icon><div class="clock">19:30<br>05-06-2025</div></div>`);

define('desktop-screen', `<style>
  :host{display:flex;flex-direction:column;height:100vh;position:relative;background:#3b3b3b}
  .frame{flex:1;min-height:0;display:flex;margin:0 5px 6px;padding:0 55px;background:#000;border-radius:12px;overflow:hidden}
  </style>
  <tab-strip></tab-strip><address-bar></address-bar><bookmarks-bar></bookmarks-bar>
  <main class="frame"><ams-page></ams-page></main>
  <task-bar></task-bar>
  <terabox-badge>TeraBox</terabox-badge>`);
</script>
</body>
</html>
